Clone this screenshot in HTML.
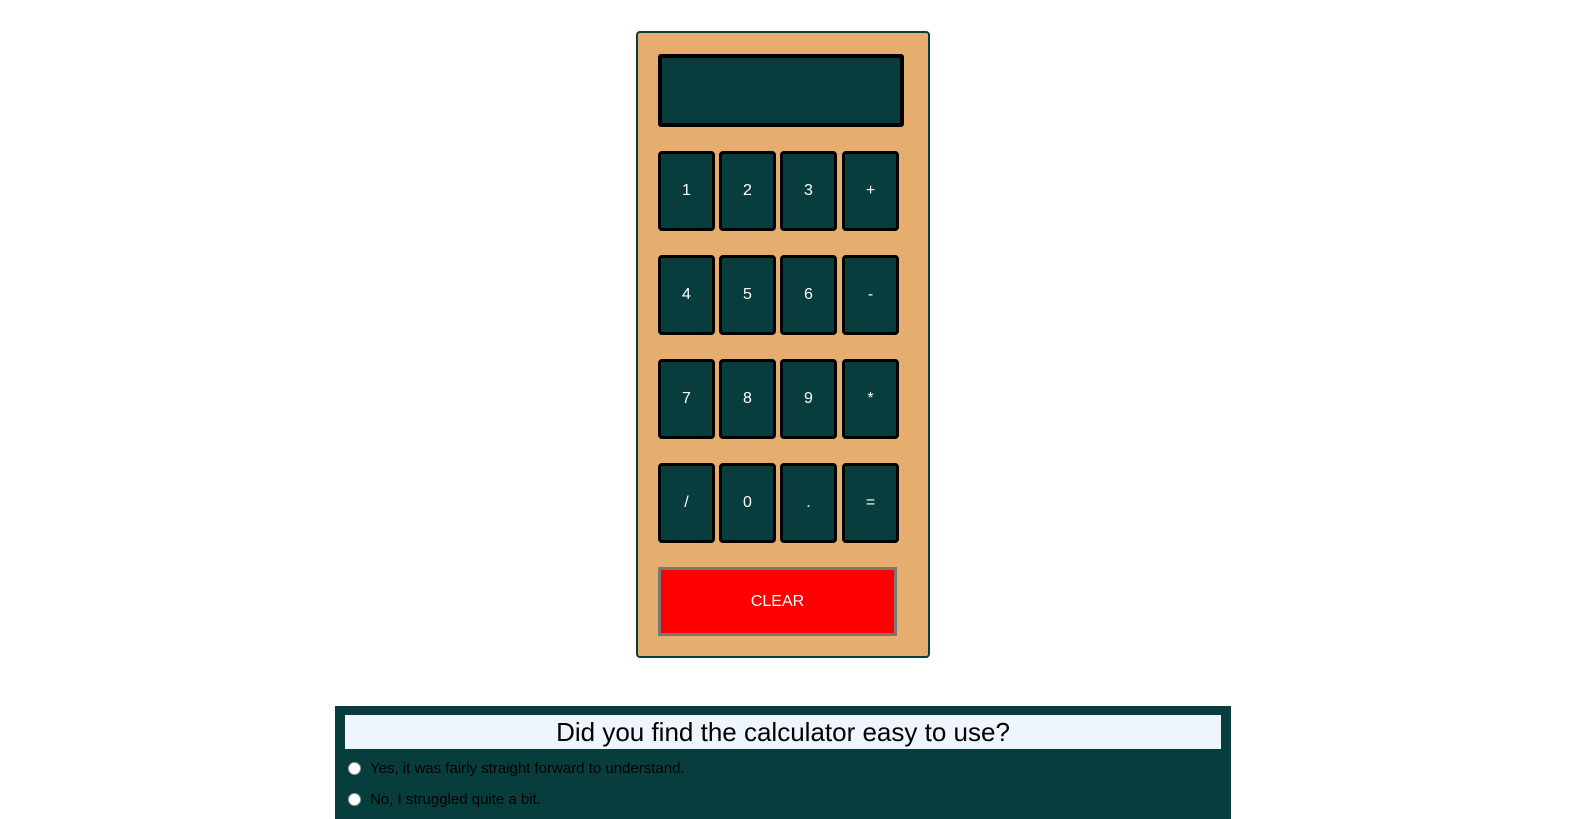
<!DOCTYPE html>
<html><head><style>
body{margin:0;background:#fff;font-family:"Liberation Sans",sans-serif;width:1596px;height:819px;overflow:hidden;position:relative}
.calc{position:absolute;left:636px;top:31px;width:290px;height:623px;background:#e5ae6f;border:2px solid #083d3d;border-radius:4px}
.disp{position:absolute;left:658px;top:54px;width:238px;height:65px;background:#083d3d;border:4px solid #000;border-radius:3px}
.b{position:absolute;width:51px;height:74px;background:#083d3d;border:3px solid #000;border-radius:4px;color:#fff;font-size:16px;display:flex;align-items:center;justify-content:center}
.clear{position:absolute;left:658px;top:567px;width:233px;height:63px;background:#fe0000;border:3px solid #777;color:#fff;font-size:16px;display:flex;align-items:center;justify-content:center}
.sv{position:absolute;left:335px;top:706px;width:896px;height:113px;background:#083d3d}
.h{position:absolute;left:10px;top:9px;width:876px;height:34px;background:#eef5fd;text-align:center;font-size:26px;line-height:34px;color:#000}
.r{position:absolute;left:13px;font-size:15px;color:#000;display:flex;align-items:center}
.r i{display:inline-block;width:11px;height:11px;border-radius:50%;background:#fff;margin-right:9px;border:1px solid #999}
</style></head><body>
<div class="calc"></div>
<div class="disp"></div>
<div class="b" style="left:658px;top:151px">1</div>
<div class="b" style="left:719px;top:151px">2</div>
<div class="b" style="left:780px;top:151px">3</div>
<div class="b" style="left:842px;top:151px">+</div>
<div class="b" style="left:658px;top:255px">4</div>
<div class="b" style="left:719px;top:255px">5</div>
<div class="b" style="left:780px;top:255px">6</div>
<div class="b" style="left:842px;top:255px">-</div>
<div class="b" style="left:658px;top:359px">7</div>
<div class="b" style="left:719px;top:359px">8</div>
<div class="b" style="left:780px;top:359px">9</div>
<div class="b" style="left:842px;top:359px">*</div>
<div class="b" style="left:658px;top:463px">/</div>
<div class="b" style="left:719px;top:463px">0</div>
<div class="b" style="left:780px;top:463px">.</div>
<div class="b" style="left:842px;top:463px">=</div>
<div class="clear">CLEAR</div>
<div class="sv">
<div class="h">Did you find the calculator easy to use?</div>
<div class="r" style="top:54px"><i></i>Yes, it was fairly straight forward to understand.</div>
<div class="r" style="top:85px"><i></i>No, I struggled quite a bit.</div>
</div>
</body></html>
